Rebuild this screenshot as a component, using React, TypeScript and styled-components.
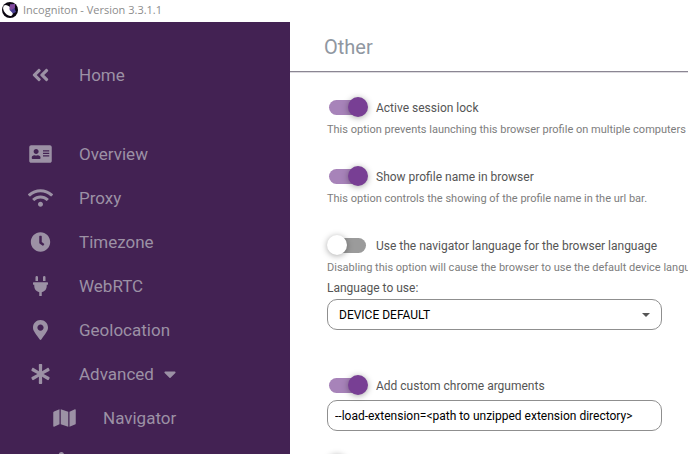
import React from 'react';
import styled, { createGlobalStyle } from 'styled-components';
import {
  FaAddressCard,
  FaAngleDoubleLeft,
  FaAsterisk,
  FaCaretDown,
  FaClock,
  FaMap,
  FaMapMarkerAlt,
  FaPlug,
  FaPuzzlePiece,
  FaWifi,
} from 'react-icons/fa';

const GlobalStyle = createGlobalStyle`
  *, *::before, *::after { box-sizing: border-box; }
  body {
    margin: 0;
    overflow: hidden;
    background: #fff;
    font-family: Roboto, "Liberation Sans", sans-serif;
  }
`;

const Window = styled.div`
  display: flex;
  flex-direction: column;
  height: 100vh;
  overflow: hidden;
`;

const TitleBar = styled.header`
  display: flex;
  flex: none;
  align-items: center;
  gap: 5px;
  height: 22px;
  padding: 0 2px 2px;
  background: #fff;
  color: #8c8c8c;
  font: 11px/20px "Open Sans", "Noto Sans", sans-serif;
`;

const Body = styled.div`
  display: grid;
  flex: 1;
  grid-template-columns: 290px minmax(0, 1fr);
  min-height: 0;
`;

const Sidebar = styled.nav`
  padding-top: 31px;
  overflow: hidden;
  background: #432253;
`;

const NavList = styled.ul`
  margin: 0;
  padding: 0;
  list-style: none;
`;

const NavItem = styled.li<{ $spaced?: boolean }>`
  margin-bottom: ${(p) => (p.$spaced ? '35px' : '0')};
`;

const NavLink = styled.a<{ $nested?: boolean }>`
  display: flex;
  align-items: center;
  height: 44px;
  padding-left: ${(p) => (p.$nested ? '52px' : '28px')};
  color: #9c91a5;
  font-size: 17px;
  line-height: 24px;
  text-decoration: none;
`;

const NavIcon = styled.span`
  display: flex;
  margin-right: 26px;

  svg {
    width: 25px;
    height: 20px;
  }
`;

const Caret = styled(FaCaretDown)`
  width: 12px;
  height: 20px;
  margin-left: 10px;
`;

const Main = styled.main`
  overflow: hidden;
  background: #fff;
`;

const Heading = styled.h1`
  height: 50px;
  margin: 0;
  padding-left: 34px;
  border-bottom: 1px solid #8b8693;
  box-shadow: 0 1px 0 #dddbe0;
  color: #9097a1;
  font-size: 20px;
  font-weight: 400;
  line-height: 51px;
`;

const Settings = styled.form`
  padding: 23px 0 0 37px;
`;

const Setting = styled.section<{ $gap: number }>`
  margin-bottom: ${(p) => p.$gap}px;
`;

const SwitchRow = styled.div`
  display: flex;
  align-items: center;
  gap: 10px;
  height: 24px;
  padding-left: 2px;
`;

const Switch = styled.input`
  position: relative;
  flex: none;
  width: 37px;
  height: 15px;
  margin: 0;
  border-radius: 8px;
  background: #9b9b9b;
  appearance: none;

  &::before {
    position: absolute;
    top: -3px;
    left: -2px;
    width: 20px;
    height: 20px;
    border-radius: 50%;
    background: #fff;
    box-shadow: 0 1px 6px rgba(0, 0, 0, 0.35);
    content: "";
  }

  &:checked {
    background: #a783b9;
  }

  &:checked::before {
    left: 19px;
    background: #783f94;
  }
`;

const SwitchLabel = styled.label`
  padding-top: 2px;
  color: #555;
  font-size: 12px;
  line-height: 20px;
  white-space: nowrap;
`;

const Description = styled.p`
  margin: 0;
  color: #7d7d7d;
  font-size: 11px;
  line-height: 22px;
  white-space: nowrap;
`;

const FieldLabel = styled.label`
  display: block;
  margin-bottom: 2px;
  color: #555;
  font-size: 12px;
  line-height: 18px;
`;

const SelectBox = styled.div`
  position: relative;
  width: calc(100% - 26px);
  max-width: 335px;
`;

const Select = styled.select`
  display: block;
  width: 100%;
  height: 31px;
  padding: 0 32px 0 11px;
  border: 1px solid #8f8f8f;
  border-radius: 10px;
  background: #fff;
  color: #000;
  font: 12px Roboto, sans-serif;
  appearance: none;
`;

const SelectArrow = styled.svg`
  position: absolute;
  top: 14px;
  right: 12px;
  pointer-events: none;
`;

const TextInput = styled.input`
  display: block;
  width: calc(100% - 26px);
  max-width: 335px;
  height: 31px;
  margin-top: 3px;
  padding: 0 7px;
  border: 1px solid #8f8f8f;
  border-radius: 10px;
  background: #fff;
  color: #000;
  font: 12px Roboto, sans-serif;
`;

function Logo() {
  return (
    <svg width="16" height="16" viewBox="0 0 16 16" aria-hidden="true">
      <circle cx="8" cy="8" r="8" fill="#0b0610" />
      <ellipse cx="6" cy="8.500" rx="6.200" ry="3.800" fill="#fff" transform="rotate(52 6 8.500)" />
      <path d="M8 2.500 13 2l-.2 5 1.200 3-3 1.400L7.600 8z" fill="#4b3f96" />
      <path d="M8 2.500 13 2l-.2 4L9 8 7.600 7z" fill="#81489c" />
    </svg>
  );
}

const navItems = [
  { name: 'Home', Icon: FaAngleDoubleLeft, spaced: true },
  { name: 'Overview', Icon: FaAddressCard },
  { name: 'Proxy', Icon: FaWifi },
  { name: 'Timezone', Icon: FaClock },
  { name: 'WebRTC', Icon: FaPlug },
  { name: 'Geolocation', Icon: FaMapMarkerAlt },
  { name: 'Advanced', Icon: FaAsterisk, expandable: true },
  { name: 'Navigator', Icon: FaMap, nested: true },
  { name: 'Plugins', Icon: FaPuzzlePiece, nested: true, iconOnly: true },
];

type ToggleProps = { id: string; label?: string; on?: boolean };

function Toggle({ id, label, on }: ToggleProps) {
  return (
    <SwitchRow>
      <Switch type="checkbox" role="switch" id={id} defaultChecked={on} aria-label={label ? undefined : 'More options'} />
      {label && <SwitchLabel htmlFor={id}>{label}</SwitchLabel>}
    </SwitchRow>
  );
}

export default function App() {
  return (
    <Window>
      <GlobalStyle />
      <TitleBar>
        <Logo />
        <span>Incogniton - Version 3.3.1.1</span>
      </TitleBar>
      <Body>
        <Sidebar>
          <NavList>
            {navItems.map(({ name, Icon, spaced, nested, expandable, iconOnly }) => (
              <NavItem key={name} $spaced={spaced}>
                <NavLink href="#" $nested={nested} aria-label={iconOnly ? name : undefined}>
                  <NavIcon>
                    <Icon />
                  </NavIcon>
                  {!iconOnly && name}
                  {expandable && <Caret />}
                </NavLink>
              </NavItem>
            ))}
          </NavList>
        </Sidebar>
        <Main>
          <Heading>Other</Heading>
          <Settings>
            <Setting $gap={23}>
              <Toggle id="session-lock" label="Active session lock" on />
              <Description>This option prevents launching this browser profile on multiple computers</Description>
            </Setting>
            <Setting $gap={23}>
              <Toggle id="profile-name" label="Show profile name in browser" on />
              <Description>This option controls the showing of the profile name in the url bar.</Description>
            </Setting>
            <Setting $gap={43}>
              <Toggle id="navigator-language" label="Use the navigator language for the browser language" />
              <Description>Disabling this option will cause the browser to use the default device language</Description>
              <FieldLabel htmlFor="language">Language to use:</FieldLabel>
              <SelectBox>
                <Select id="language">
                  <option>DEVICE DEFAULT</option>
                </Select>
                <SelectArrow width="8" height="4" viewBox="0 0 8 4">
                  <path d="M0 0h8L4 4z" fill="#555" />
                </SelectArrow>
              </SelectBox>
            </Setting>
            <Setting $gap={21}>
              <Toggle id="chrome-arguments" label="Add custom chrome arguments" on />
              <TextInput
                type="text"
                aria-label="Custom chrome arguments"
                defaultValue="--load-extension=<path to unzipped extension directory>"
              />
            </Setting>
            <Toggle id="more-options" />
          </Settings>
        </Main>
      </Body>
    </Window>
  );
}
